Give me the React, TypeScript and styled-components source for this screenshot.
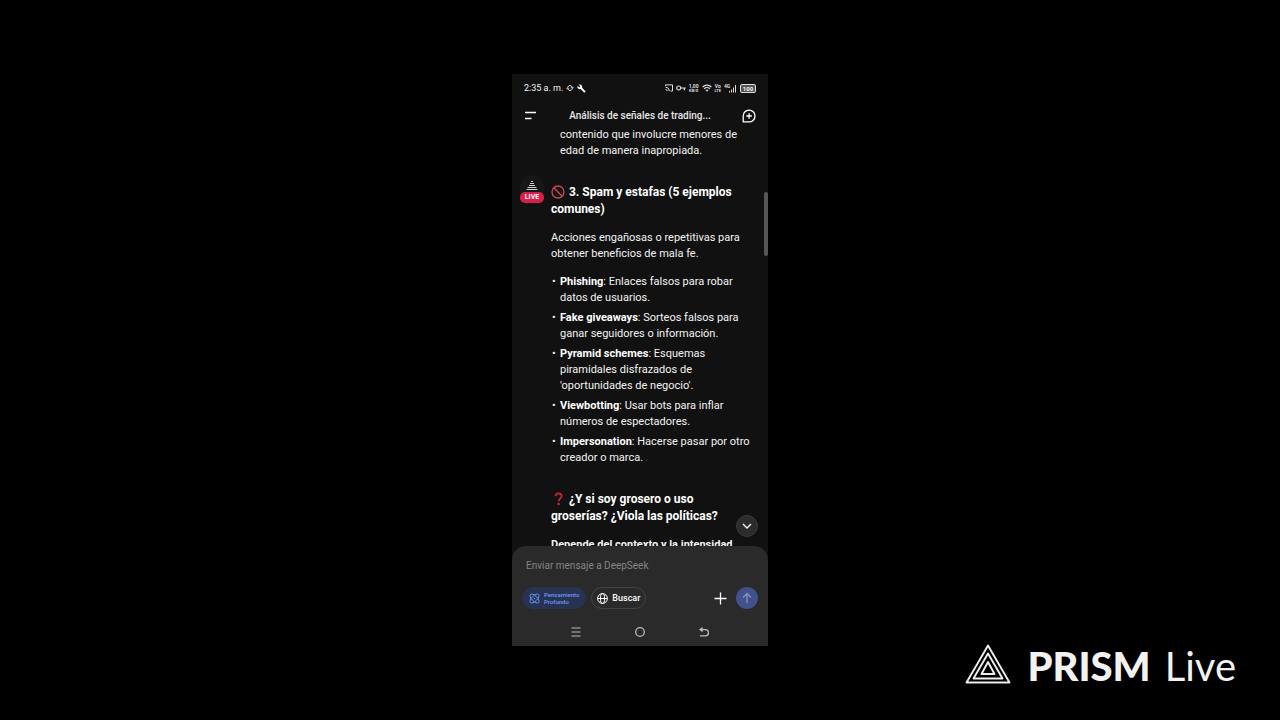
import React from "react";
import styled, { createGlobalStyle } from "styled-components";

const GlobalStyle = createGlobalStyle`
  *, *::before, *::after { box-sizing: border-box; }
  body { margin: 0; background: #000; }
  button, input { font: inherit; color: inherit; }
  p, h1, h2, ul { margin: 0; padding: 0; }
`;

const Stage = styled.div`
  position: relative;
  display: flex;
  justify-content: center;
  height: 100vh;
  min-height: 480px;
  padding: 74px 16px;
  background: #000;
  color: #f4f4f4;
  font-family: Roboto, "Liberation Sans", sans-serif;
`;

const Phone = styled.main`
  position: relative;
  display: flex;
  flex-direction: column;
  width: 20vw;
  min-width: 256px;
  background: #111;
`;

const StatusBar = styled.div`
  display: flex;
  align-items: center;
  justify-content: space-between;
  height: 28px;
  padding: 0 12px;
  font-size: 9px;
  line-height: 12px;
`;

const StatusGroup = styled.div`
  display: flex;
  align-items: center;
  gap: 3px;
`;

const TinyLabel = styled.span`
  display: flex;
  flex-direction: column;
  align-items: center;
  font-size: 5px;
  line-height: 5px;
  font-weight: 700;
  color: #ddd;
`;

const TinyUnit = styled.span`
  font-size: 4px;
  line-height: 4px;
`;

const Battery = styled.span`
  display: flex;
  align-items: center;
  justify-content: center;
  width: 16px;
  height: 9px;
  border: 1px solid #ddd;
  border-radius: 2px;
  background: #555;
  font-size: 6px;
  line-height: 7px;
  font-weight: 700;
`;

const Header = styled.header`
  display: flex;
  align-items: center;
  justify-content: space-between;
  height: 25px;
  padding: 3px 12px 0;
`;

const Title = styled.h1`
  font-size: 10px;
  line-height: 14px;
  font-weight: 500;
  color: #e8e8e8;
`;

const IconButton = styled.button`
  display: flex;
  align-items: center;
  justify-content: center;
  padding: 0;
  border: 0;
  background: none;
  cursor: pointer;
`;

const Conversation = styled.section`
  flex: 1;
  min-height: 0;
  overflow: hidden;
  padding: 0 12px 0 39px;
  font-size: 11px;
  line-height: 16px;
`;

const Continued = styled.p`
  padding-left: 9px;
`;

const Heading = styled.h2`
  margin-top: 25px;
  padding-right: 12px;
  font-size: 12px;
  line-height: 17px;
  font-weight: 700;
  color: #fff;

  svg { margin-right: 1px; vertical-align: -3px; }
`;

const Paragraph = styled.p`
  margin-top: 12px;
`;

const List = styled.ul`
  display: flex;
  flex-direction: column;
  gap: 4px;
  margin-top: 12px;
  list-style: none;
`;

const Item = styled.li`
  display: flex;
  padding-left: 1px;

  &::before { content: "•"; flex: none; width: 8px; }
  strong { color: #fff; }
`;

const LiveBadge = styled.div`
  position: absolute;
  top: 101px;
  left: 8px;
  display: flex;
  flex-direction: column;
  align-items: center;
  width: 24px;
  height: 28px;
  padding-top: 6px;
  border-radius: 12px;
  background: #171717;
`;

const LiveLabel = styled.span`
  width: 24px;
  margin-top: 1px;
  border-radius: 5px;
  background: #d91f49;
  color: #fff;
  font-size: 7px;
  line-height: 11px;
  font-weight: 700;
  text-align: center;
`;

const ScrollThumb = styled.div`
  position: absolute;
  top: 118px;
  right: 0;
  width: 4px;
  height: 64px;
  border-radius: 2px;
  background: #555;
`;

const ScrollDown = styled(IconButton)`
  position: absolute;
  right: 10px;
  bottom: 109px;
  width: 22px;
  height: 22px;
  border: 1px solid #3a3a3a;
  border-radius: 50%;
  background: #2c2c2c;
`;

const Composer = styled.form`
  padding: 10px 10px 0;
  border-radius: 14px 14px 0 0;
  background: #2a2a2a;
`;

const MessageInput = styled.input`
  display: block;
  width: 100%;
  height: 18px;
  padding: 0 4px;
  border: 0;
  outline: 0;
  background: none;
  font-size: 10px;
  line-height: 16px;

  &::placeholder { color: #858585; opacity: 1; }
`;

const Tools = styled.div`
  display: flex;
  align-items: center;
  gap: 5px;
  margin-top: 13px;
`;

const Chip = styled.button<{ $active?: boolean }>`
  display: flex;
  align-items: center;
  gap: 4px;
  height: 22px;
  padding: 0 ${({ $active }) => ($active ? 6 : 5)}px;
  border: 1px solid ${({ $active }) => ($active ? "#263452" : "#444")};
  border-radius: 11px;
  background: ${({ $active }) => ($active ? "#263452" : "transparent")};
  color: ${({ $active }) => ($active ? "#7094f5" : "#fff")};
  font-size: ${({ $active }) => ($active ? 6 : 9)}px;
  line-height: ${({ $active }) => ($active ? 7 : 12)}px;
  font-weight: 500;
  text-align: left;
  cursor: pointer;
`;

const Actions = styled.div`
  display: flex;
  align-items: center;
  gap: 9px;
  margin-left: auto;
`;

const SendButton = styled(IconButton)`
  width: 22px;
  height: 22px;
  border-radius: 50%;
  background: #41518b;
`;

const NavBar = styled.nav`
  display: grid;
  grid-template-columns: repeat(3, 1fr);
  height: 37px;
  padding: 9px 32px 0;
  background: #2a2a2a;
`;

const Watermark = styled.div`
  position: absolute;
  right: 44px;
  bottom: 30px;
  display: flex;
  align-items: flex-start;
  gap: 16px;
  color: #f2f2f2;
  font-family: Lato, "Open Sans", sans-serif;
  font-size: 40px;
  line-height: 48px;

  svg { margin-top: 2px; }
`;

const Wordmark = styled.div`
  display: flex;
  gap: 14px;
  font-weight: 400;

  strong { font-weight: 900; }
`;

const Prohibited = () => (
  <svg width="14" height="14" viewBox="0 0 14 14" fill="none" stroke="#c94a52" strokeWidth="1.3" aria-hidden="true">
    <circle cx="7" cy="7" r="6" />
    <path d="M2.8 2.8l8.4 8.4" />
  </svg>
);

const Question = () => (
  <svg width="14" height="14" viewBox="0 0 14 14" fill="none" aria-hidden="true">
    <path d="M4.4 4.3C4.4 2.4 5.7 1.3 7.5 1.3s3.1 1.1 3.1 2.7c0 2.2-2.9 2.4-2.9 5.2" stroke="#cf2340" strokeWidth="1.7" />
    <circle cx="7.6" cy="12" r="1.2" fill="#cf2340" />
  </svg>
);

const entries = [
  ["Phishing", "Enlaces falsos para robar datos de usuarios."],
  ["Fake giveaways", "Sorteos falsos para ganar seguidores o información."],
  ["Pyramid schemes", "Esquemas piramidales disfrazados de 'oportunidades de negocio'."],
  ["Viewbotting", "Usar bots para inflar números de espectadores."],
  ["Impersonation", "Hacerse pasar por otro creador o marca."],
];

export default function App() {
  return (
    <Stage>
      <GlobalStyle />
      <Phone>
        <StatusBar>
          <StatusGroup>
            <span>2:35 a. m.</span>
            <svg width="8" height="8" viewBox="0 0 16 16" fill="none" stroke="#ddd" strokeWidth="2">
              <path d="M3.5 6A5 5 0 0 1 12.500 6M12.500 10A5 5 0 0 1 3.500 10" />
              <path d="M9 6.500h7L12.500 10zM7 9.500H0L3.500 6z" fill="#ddd" stroke="none" />
            </svg>
            <svg width="9" height="9" viewBox="0 0 24 24" fill="#fff">
              <path d="M22.7 19l-9.1-9.1c.9-2.3.4-5-1.5-6.9-2-2-5-2.4-7.4-1.3L9 6 6 9 1.6 4.7C.4 7.1.9 10.1 2.9 12.1c1.9 1.9 4.6 2.4 6.9 1.5l9.1 9.1c.4.4 1 .4 1.4 0l2.3-2.3c.5-.4.5-1.1.1-1.4z" />
            </svg>
          </StatusGroup>
          <StatusGroup>
            <svg width="8" height="8" viewBox="0 0 8 8" fill="none" stroke="#ddd">
              <path d="M.5 2V.9h7v6.2H5.5M.5 3.2a3.900 3.900 0 0 1 3.900 3.900M.5 5.400a1.900 1.900 0 0 1 1.800 1.800" />
            </svg>
            <svg width="10" height="8" viewBox="0 0 10 8" fill="none" stroke="#ddd" strokeWidth="1.2">
              <circle cx="2.7" cy="4" r="2" />
              <path d="M4.7 4H9.8M8.3 4v2.2" />
            </svg>
            <TinyLabel><span>1,00</span><TinyUnit>KB/S</TinyUnit></TinyLabel>
            <svg width="10" height="8" viewBox="0 0 10 8" fill="none" stroke="#ddd" strokeWidth="1.2">
              <path d="M.6 3a6.300 6.300 0 0 1 8.800 0M2.100 4.800a4.200 4.200 0 0 1 5.800 0" />
              <path d="M3.3 5.800h3.400L5 7.800z" fill="#ddd" stroke="none" />
            </svg>
            <TinyLabel><span>Vo</span><TinyUnit>LTE</TinyUnit></TinyLabel>
            <svg width="13" height="9" viewBox="0 0 13 9">
              <text x="0" y="4" fontSize="5" fontWeight="700" fill="#ddd">4G</text>
              <path d="M5 7h1v1.5H5zM7 5.500h1v3H7zM9 3.500h1v5H9zM11 1h1v7.500h-1z" fill="#ddd" />
            </svg>
            <Battery>100</Battery>
          </StatusGroup>
        </StatusBar>

        <Header>
          <IconButton aria-label="Menú">
            <svg width="14" height="12" viewBox="0 0 14 12" stroke="#fff" strokeWidth="1.3">
              <path d="M1 2.5h11M1 8.5h6.5" />
            </svg>
          </IconButton>
          <Title>Análisis de señales de trading...</Title>
          <IconButton aria-label="Nuevo chat">
            <svg width="14" height="14" viewBox="0 0 14 14" fill="none" stroke="#fff" strokeWidth="1.3">
              <path d="M1.2 12.9V7a5.9 5.9 0 1 1 5.9 5.9z" strokeLinejoin="round" />
              <path d="M7.1 4.2v5.6M4.3 7h5.6" />
            </svg>
          </IconButton>
        </Header>

        <Conversation>
          <Continued>contenido que involucre menores de edad de manera inapropiada.</Continued>
          <Heading><Prohibited /> 3. Spam y estafas (5 ejemplos comunes)</Heading>
          <Paragraph>Acciones engañosas o repetitivas para obtener beneficios de mala fe.</Paragraph>
          <List>
            {entries.map(([name, text]) => (
              <Item key={name}>
                <span><strong>{name}</strong>: {text}</span>
              </Item>
            ))}
          </List>
          <Heading><Question /> ¿Y si soy grosero o uso groserías? ¿Viola las políticas?</Heading>
          <Paragraph><strong>Depende del contexto y la intensidad</strong></Paragraph>
        </Conversation>

        <Composer onSubmit={(e) => e.preventDefault()}>
          <MessageInput aria-label="Mensaje" placeholder="Enviar mensaje a DeepSeek" />
          <Tools>
            <Chip type="button" $active aria-pressed="true">
              <svg width="11" height="11" viewBox="0 0 12 12" fill="none" stroke="currentColor">
                <ellipse cx="6" cy="6" rx="6.3" ry="2.9" transform="rotate(45 6 6)" />
                <ellipse cx="6" cy="6" rx="6.3" ry="2.9" transform="rotate(-45 6 6)" />
                <circle cx="6" cy="6" r=".8" fill="currentColor" stroke="none" />
              </svg>
              <span>Pensamiento<br />Profundo</span>
            </Chip>
            <Chip type="button">
              <svg width="11" height="11" viewBox="0 0 11 11" fill="none" stroke="currentColor">
                <circle cx="5.5" cy="5.5" r="4.9" />
                <ellipse cx="5.5" cy="5.5" rx="2.1" ry="4.9" />
                <path d="M.6 5.5h9.8" />
              </svg>
              Buscar
            </Chip>
            <Actions>
              <IconButton type="button" aria-label="Adjuntar">
                <svg width="13" height="13" viewBox="0 0 13 13" stroke="#fff" strokeWidth="1.3">
                  <path d="M6.5.5v12M.5 6.5h12" />
                </svg>
              </IconButton>
              <SendButton type="submit" aria-label="Enviar">
                <svg width="10" height="12" viewBox="0 0 10 12" fill="none" stroke="#8794bd" strokeWidth="1.3">
                  <path d="M5 11V1.5M1 5.5l4-4 4 4" />
                </svg>
              </SendButton>
            </Actions>
          </Tools>
        </Composer>
        <NavBar aria-label="Sistema">
          <IconButton aria-label="Recientes">
            <svg width="10" height="10" viewBox="0 0 10 10" stroke="#bbb" strokeWidth="1.2">
              <path d="M.5 1h9M.5 5h9M.5 9h9" />
            </svg>
          </IconButton>
          <IconButton aria-label="Inicio">
            <svg width="10" height="10" viewBox="0 0 10 10" fill="none" stroke="#bbb" strokeWidth="1.3">
              <circle cx="5" cy="5" r="4.3" />
            </svg>
          </IconButton>
          <IconButton aria-label="Atrás">
            <svg width="10" height="10" viewBox="0 0 10 10" fill="none" stroke="#bbb" strokeWidth="1.4">
              <path d="M1 2.6h5.400a3.100 3.100 0 0 1 0 6.300H1" />
              <path d="M3.600 0v5.200L0 2.600z" fill="#bbb" stroke="none" />
            </svg>
          </IconButton>
        </NavBar>

        <LiveBadge>
          <svg width="12" height="10" viewBox="0 0 12 10" fill="none" stroke="#ccc">
            <path d="M5 .5h2M4 2.500h4M3 4.500h6M1.500 6.500h9M.5 8.500h11" />
          </svg>
          <LiveLabel>LIVE</LiveLabel>
        </LiveBadge>
        <ScrollThumb />
        <ScrollDown aria-label="Ir al final">
          <svg width="10" height="6" viewBox="0 0 10 6" fill="none" stroke="#fff" strokeWidth="1.3">
            <path d="M1 1l4 4 4-4" />
          </svg>
        </ScrollDown>
      </Phone>

      <Watermark>
        <svg width="46" height="40" viewBox="0 0 46 40" fill="none" stroke="#eee" strokeWidth="1.9" strokeLinejoin="round">
          <path d="M23 1.500L44.500 38.500h-43z" />
          <path d="M23 9.500L37.500 34.500h-29z" />
          <path d="M23 18L29.500 30h-13z" />
        </svg>
        <Wordmark><strong>PRISM</strong><span>Live</span></Wordmark>
      </Watermark>
    </Stage>
  );
}
